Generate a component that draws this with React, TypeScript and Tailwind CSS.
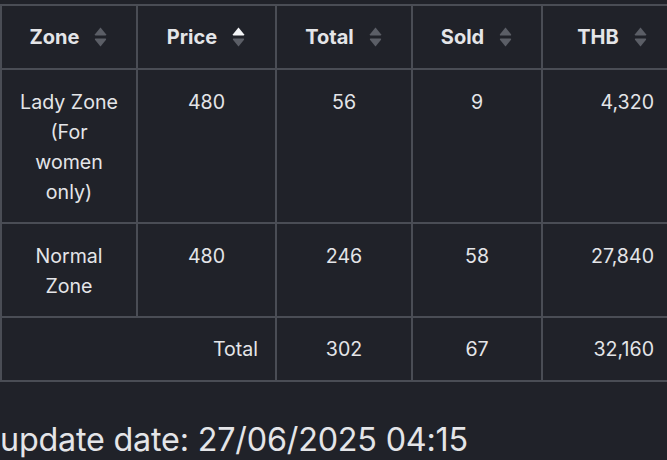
import React from "react";

type Row = { zone: string; price: string; total: string; sold: string; thb: string };

const rows: Row[] = [
	{ zone: "Lady Zone (For women only)", price: "480", total: "56", sold: "9", thb: "4,320" },
	{ zone: "Normal Zone", price: "480", total: "246", sold: "58", thb: "27,840" },
];

function SortIcon({ active }: { active?: "up" | "down" }) {
	return (
		<svg width="15" height="22" viewBox="0 0 15 22" className="shrink-0">
			<path
				d="M7.5 1.5 L13 8.3 Q13.6 9.5 12.4 9.5 L2.6 9.5 Q1.4 9.5 2 8.3 Z"
				fill={active === "up" ? "#f3f4f6" : "#5b5e66"}
			/>
			<path
				d="M7.5 20.5 L13 13.7 Q13.6 12.5 12.4 12.5 L2.6 12.5 Q1.4 12.5 2 13.7 Z"
				fill={active === "down" ? "#f3f4f6" : "#5b5e66"}
			/>
		</svg>
	);
}

function HeaderCell({ label, active }: { label: string; active?: "up" | "down" }) {
	return (
		<th className="h-[64px] border-2 border-[#4a4d55] p-0 text-[20px] font-bold">
			<div className="flex items-center justify-center gap-[14px]">
				<span>{label}</span>
				<SortIcon active={active} />
			</div>
		</th>
	);
}

export default function App() {
	return (
		<div
			className="h-[460px] w-[667px] overflow-hidden bg-[#202229] pt-[4px] text-[19.6px] text-[#e4e5e8]"
			style={{ fontFamily: "Inter, 'Noto Sans', sans-serif" }}
		>
			<table className="w-[682px] table-fixed border-collapse leading-[30px]">
				<colgroup>
					<col className="w-[136px]" />
					<col className="w-[139px]" />
					<col className="w-[136px]" />
					<col className="w-[130px]" />
					<col className="w-[141px]" />
				</colgroup>
				<thead>
					<tr>
						<HeaderCell label="Zone" />
						<HeaderCell label="Price" active="up" />
						<HeaderCell label="Total" />
						<HeaderCell label="Sold" />
						<HeaderCell label="THB" />
					</tr>
				</thead>
				<tbody>
					{rows.map((row) => (
						<tr key={row.zone}>
							<td className="border-2 border-[#4a4d55] px-[16px] pt-[17px] pb-[15px] text-center align-top">
								{row.zone}
							</td>
							<td className="border-2 border-[#4a4d55] px-[16px] pt-[17px] text-center align-top">{row.price}</td>
							<td className="border-2 border-[#4a4d55] px-[16px] pt-[17px] text-center align-top">{row.total}</td>
							<td className="border-2 border-[#4a4d55] px-[16px] pt-[17px] text-center align-top">{row.sold}</td>
							<td className="border-2 border-[#4a4d55] pt-[17px] pr-[28px] text-right align-top">{row.thb}</td>
						</tr>
					))}
					<tr>
						<td colSpan={2} className="h-[64px] border-2 border-[#4a4d55] pr-[17px] text-right">
							Total
						</td>
						<td className="border-2 border-[#4a4d55] text-center">302</td>
						<td className="border-2 border-[#4a4d55] text-center">67</td>
						<td className="border-2 border-[#4a4d55] pr-[28px] text-right">32,160</td>
					</tr>
				</tbody>
			</table>
			<p className="mt-[38px] text-[32.3px] leading-[40px] tracking-[-0.2px]">update date: 27/06/2025 04:15</p>
		</div>
	);
}
